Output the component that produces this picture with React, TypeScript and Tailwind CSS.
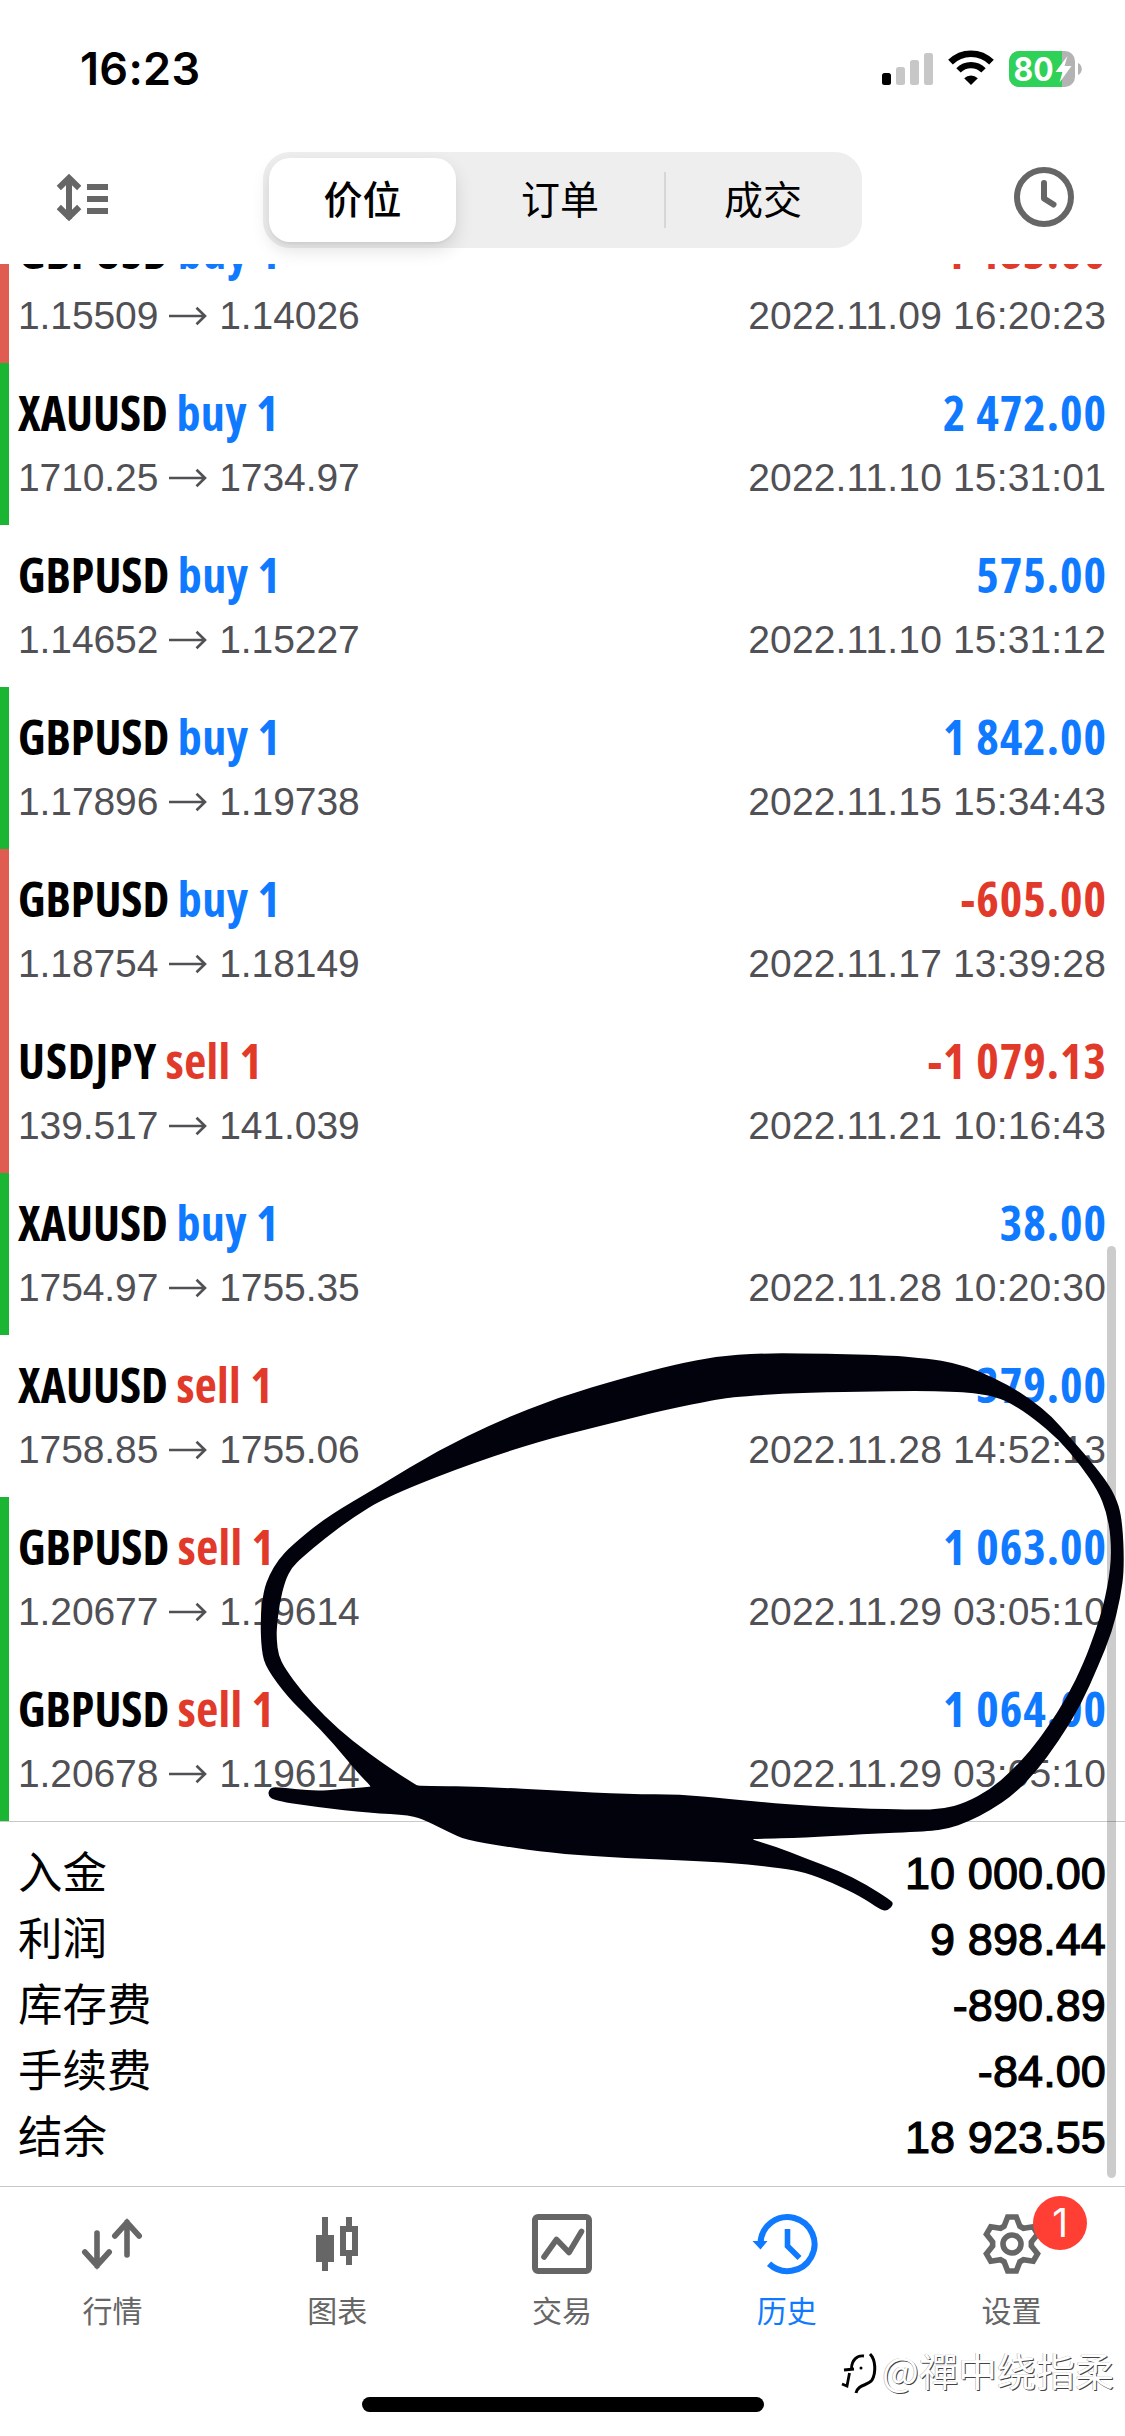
import { useState } from "react";

type Deal = {
  symbol: string;
  side: "buy" | "sell";
  open: string;
  close: string;
  profit: string;
  time: string;
  mark?: "tp" | "sl";
};

const deals: Deal[] = [
  { symbol: "GBPUSD", side: "buy", open: "1.15509", close: "1.14026", profit: "-1 483.00", time: "2022.11.09 16:20:23", mark: "sl" },
  { symbol: "XAUUSD", side: "buy", open: "1710.25", close: "1734.97", profit: "2 472.00", time: "2022.11.10 15:31:01", mark: "tp" },
  { symbol: "GBPUSD", side: "buy", open: "1.14652", close: "1.15227", profit: "575.00", time: "2022.11.10 15:31:12" },
  { symbol: "GBPUSD", side: "buy", open: "1.17896", close: "1.19738", profit: "1 842.00", time: "2022.11.15 15:34:43", mark: "tp" },
  { symbol: "GBPUSD", side: "buy", open: "1.18754", close: "1.18149", profit: "-605.00", time: "2022.11.17 13:39:28", mark: "sl" },
  { symbol: "USDJPY", side: "sell", open: "139.517", close: "141.039", profit: "-1 079.13", time: "2022.11.21 10:16:43", mark: "sl" },
  { symbol: "XAUUSD", side: "buy", open: "1754.97", close: "1755.35", profit: "38.00", time: "2022.11.28 10:20:30", mark: "tp" },
  { symbol: "XAUUSD", side: "sell", open: "1758.85", close: "1755.06", profit: "379.00", time: "2022.11.28 14:52:13" },
  { symbol: "GBPUSD", side: "sell", open: "1.20677", close: "1.19614", profit: "1 063.00", time: "2022.11.29 03:05:10", mark: "tp" },
  { symbol: "GBPUSD", side: "sell", open: "1.20678", close: "1.19614", profit: "1 064.00", time: "2022.11.29 03:05:10", mark: "tp" },
];

const totals = [
  { label: "入金", value: "10 000.00" },
  { label: "利润", value: "9 898.44" },
  { label: "库存费", value: "-890.89" },
  { label: "手续费", value: "-84.00" },
  { label: "结余", value: "18 923.55" },
];

const StatusBar = () => (
  <div className="flex h-[132px] shrink-0 items-start justify-between pl-[80px] pr-[42px] pt-[45px]">
    <span className="font-['Inter',sans-serif] text-[45px] font-semibold leading-[48px] tracking-[0.3px]">16:23</span>
    <div className="flex items-center pt-[5px]">
      <svg width="52" height="38" viewBox="0 0 52 38">
        <rect x="0" y="23" width="9" height="12" rx="2.5" fill="#000" />
        <rect x="14" y="17" width="9" height="18" rx="2.5" fill="#c7c7c7" />
        <rect x="28" y="10" width="9" height="25" rx="2.5" fill="#c7c7c7" />
        <rect x="42" y="3" width="9" height="32" rx="2.5" fill="#c7c7c7" />
      </svg>
      <svg className="ml-[14px]" width="46" height="38" viewBox="0 0 46 38">
        <path d="M2.5 12.2a29 29 0 0 1 41 0" fill="none" stroke="#000" strokeWidth="6.6" />
        <path d="M10.5 20.4a17.6 17.6 0 0 1 25 0" fill="none" stroke="#000" strokeWidth="6.2" />
        <path d="M16.2 28.2a9.8 9.8 0 0 1 13.6 0L23 35z" fill="#000" />
      </svg>
      <svg className="ml-[15px]" width="74" height="38" viewBox="0 0 74 38">
        <clipPath id="cell">
          <rect x="0" y="1" width="66" height="36" rx="10" />
        </clipPath>
        <g clipPath="url(#cell)">
          <rect width="66" height="38" fill="#b3b3b3" />
          <rect width="53" height="38" fill="#30d158" />
        </g>
        <path d="M69 13c5 2 5 10 0 12z" fill="#b3b3b3" />
        <text x="4.5" y="30.5" fill="#fff" fontSize="32" fontWeight="700" fontFamily="Inter, sans-serif" textLength="40" lengthAdjust="spacingAndGlyphs">80</text>
        <path d="M58.500 6L46.500 22h7l-3 10.500L62.500 16h-7z" fill="#fff" />
      </svg>
    </div>
  </div>
);

const Header = () => {
  const [active, setActive] = useState(0);
  const modes = ["价位", "订单", "成交"];
  const widths = ["w-[187px]", "w-[208px]", "w-[198px]"];

  return (
    <div className="flex h-[132px] shrink-0 items-start justify-between pl-[56px] pr-[50px] pt-[20px]">
      <svg className="mt-[21px]" width="54" height="50" viewBox="0 0 54 50" fill="none" stroke="#666" strokeWidth="6">
        <path d="M13 4v42M2.800 15L13 5l10.200 10M2.800 34L13 44l10.200-10" />
        <path d="M31 14h21M31 26h21M31 38h21" />
      </svg>
      <div className="ml-[2px] flex h-[96px] w-[599px] rounded-[27px] bg-[#eeeeee] py-[6px] pl-[6px]">
        {modes.map((mode, i) => (
          <button
            key={mode}
            onClick={() => setActive(i)}
            className={`relative h-[84px] pb-[5px] text-[39px] font-['Noto_Sans_CJK_SC',sans-serif] ${widths[i]} ${
              active === i ? "rounded-[21px] bg-white font-medium shadow-[0_8px_18px_rgba(0,0,0,0.12),0_2px_2px_rgba(0,0,0,0.04)]" : ""
            }`}
          >
            {mode}
            {i === 2 && <span className="absolute left-0 top-[14px] h-[56px] w-[2px] bg-[#d6d6d8]" />}
          </button>
        ))}
      </div>
      <svg className="mt-[14px]" width="62" height="62" viewBox="0 0 62 62" fill="none" stroke="#666" strokeWidth="6">
        <circle cx="31" cy="31" r="27" />
        <path d="M31 17v15.500l9.500 6" strokeLinecap="round" strokeLinejoin="round" />
      </svg>
    </div>
  );
};

const DealRow = ({ deal }: { deal: Deal }) => {
  const bar = deal.mark === "tp" ? "bg-[#1bb534]" : deal.mark === "sl" ? "bg-[#e05c50]" : "bg-white";
  const symbolSpacing = deal.symbol.endsWith("JPY") ? "tracking-[0.9px]" : "";

  return (
    <div className="flex h-[162px] shrink-0">
      <div className={`w-[9px] ${bar}`} />
      <div className="flex flex-1 justify-between pl-[9px] pr-[19px] pt-[22px]">
        <div>
          <div className="whitespace-nowrap font-['Open_Sans',sans-serif] text-[48px] font-bold leading-[56px] [font-stretch:75%]">
            <span className={symbolSpacing}>{deal.symbol}</span>{" "}
            <span className={`tracking-[0.4px] ${deal.side === "buy" ? "text-[#0f7aff]" : "text-[#e23a2a]"}`}>{deal.side} 1</span>
          </div>
          <div className="mt-[15px] flex items-center text-[39px] leading-[44px] tracking-[-0.1px] text-[#505055]">
            {deal.open}
            <svg className="mx-[11px]" width="39" height="20" viewBox="0 0 39 20" fill="none" stroke="currentColor" strokeWidth="2.6">
              <path d="M0 10h36M27.500 1.800l8.500 8.200-8.500 8.200" />
            </svg>
            {deal.close}
          </div>
        </div>
        <div className="text-right">
          <div
            className={`-mr-px whitespace-nowrap font-['Open_Sans',sans-serif] text-[48px] font-bold leading-[56px] tracking-[1px] [font-stretch:75%] ${
              deal.profit.startsWith("-") ? "text-[#e23a2a]" : "text-[#0f7aff]"
            }`}
          >
            {deal.profit}
          </div>
          <div className="mt-[15px] text-[39px] leading-[44px] tracking-[0.15px] text-[#505055]">{deal.time}</div>
        </div>
      </div>
    </div>
  );
};

const Totals = () => (
  <div className="h-[365px] shrink-0 border-t border-[#c8c8c8] px-[19px] pt-[17px]">
    {totals.map((t) => (
      <div key={t.label} className="flex h-[66px] items-center justify-between leading-[66px]">
        <span className="-ml-px -mt-[5px] font-['Noto_Sans_CJK_SC',sans-serif] text-[44.5px]">{t.label}</span>
        <span className="mt-[3px] text-[45px] tracking-[0.1px] [-webkit-text-stroke:1.2px_#000]">{t.value}</span>
      </div>
    ))}
  </div>
);

const QuotesIcon = () => (
  <svg width="64" height="64" viewBox="0 0 64 64" fill="none" stroke="currentColor" strokeWidth="5.6" strokeLinecap="round">
    <path d="M17 21v33M4.800 40L17 53.500 29.200 40M47 43V10M34.800 24L47 10.500 59.200 24" />
  </svg>
);

const ChartIcon = () => (
  <svg width="64" height="64" viewBox="0 0 64 64" fill="currentColor">
    <path d="M17 5h6v18h6v27h-6v9h-6v-9h-6V23h6z" />
    <path fillRule="evenodd" d="M41 5h6v9h6v30h-6v9h-6v-9h-6V14h6zM41 20v18h6V20z" />
  </svg>
);

const TradeIcon = () => (
  <svg width="64" height="64" viewBox="0 0 64 64" fill="none" stroke="currentColor" strokeWidth="6">
    <rect x="5" y="5" width="54" height="54" rx="3" />
    <path d="M14 45l12.500-17.500L39 40.500l12.500-21" strokeWidth="5.6" strokeLinecap="round" strokeLinejoin="round" />
  </svg>
);

const HistoryIcon = () => (
  <svg width="70" height="64" viewBox="-2 0 70 64" fill="none" stroke="currentColor" strokeWidth="6">
    <path d="M6.500 32A27 27 0 1 1 15 51.800" />
    <path d="M-1.500 29h15L6.500 37.500z" fill="currentColor" stroke="none" />
    <path d="M33.500 17v17l12 12" strokeWidth="5.600" />
  </svg>
);

// one tooth outline, turned six times round the hub
const tooth = [
  [-7.9, -17.8],
  [-4.3, -27],
  [4.3, -27],
  [7.9, -17.8],
];
const gearPoints = Array.from({ length: 6 }, (_, i) => {
  const a = (i * Math.PI) / 3;
  return tooth
    .map(([x, y]) => `${32 + x * Math.cos(a) - y * Math.sin(a)},${32 + x * Math.sin(a) + y * Math.cos(a)}`)
    .join(" ");
}).join(" ");

const SettingsIcon = () => (
  <svg width="64" height="64" viewBox="0 0 64 64" fill="none" stroke="currentColor" strokeWidth="5.6">
    <polygon points={gearPoints} />
    <circle cx="32" cy="32" r="9" />
  </svg>
);

const tabs = [
  { label: "行情", icon: QuotesIcon },
  { label: "图表", icon: ChartIcon },
  { label: "交易", icon: TradeIcon },
  { label: "历史", icon: HistoryIcon },
  { label: "设置", icon: SettingsIcon, badge: 1 },
];

const TabBar = () => {
  const [current, setCurrent] = useState("历史");

  return (
    <div className="flex h-[211px] shrink-0 border-t border-[#c8c8c8] pr-px pt-[25px]">
      {tabs.map(({ label, icon: Icon, badge }) => (
        <button
          key={label}
          onClick={() => setCurrent(label)}
          className={`relative flex flex-1 flex-col items-center ${current === label ? "text-[#0f7aff]" : "text-[#666]"}`}
        >
          <Icon />
          <span className="mt-[11px] font-['Noto_Sans_CJK_SC',sans-serif] text-[30px] leading-[44px]">{label}</span>
          {badge && (
            <span className="absolute left-[134px] top-[-16px] flex h-[54px] w-[54px] items-center justify-center rounded-full bg-[#ff3f34] font-['Inter',sans-serif] text-[39px] text-white">
              {badge}
            </span>
          )}
        </button>
      ))}
    </div>
  );
};

// closed curve through the middles of the segments
const smooth = (pts: number[][]) => {
  const mid = (a: number[], b: number[]) => `${(a[0] + b[0]) / 2} ${(a[1] + b[1]) / 2}`;
  const n = pts.length;
  return `M${mid(pts[n - 1], pts[0])}` + pts.map((p, i) => `Q${p[0]} ${p[1]} ${mid(p, pts[(i + 1) % n])}`).join("") + "Z";
};

const outer = [
  [232, 1192], [210, 1160], [165, 1080], [120, 1010], [85, 960], [47, 885], [38, 840], [36, 750], [42, 680], [52, 640], [68, 600],
  [90, 565], [150, 492], [250, 405], [350, 315], [455, 240], [565, 175], [680, 125], [770, 90], [845, 69], [920, 61], [1000, 61],
  [1150, 66], [1220, 75], [1265, 86], [1310, 108], [1360, 143], [1400, 180], [1440, 228], [1470, 280], [1500, 330], [1530, 385],
  [1550, 430], [1563, 490], [1567, 620], [1560, 700], [1545, 790], [1520, 880], [1490, 980], [1450, 1075], [1410, 1155],
  [1370, 1215], [1330, 1255], [1290, 1285], [1255, 1303], [1220, 1310], [1100, 1318], [1000, 1327], [915, 1330], [905, 1331], [950, 1350],
  [1000, 1380], [1060, 1412], [1110, 1450], [1150, 1487], [1159, 1500], [1147, 1519], [1133, 1514], [1100, 1480], [1050, 1445],
  [1000, 1417], [960, 1407], [880, 1393], [780, 1386], [650, 1378], [550, 1366], [470, 1350], [400, 1333], [370, 1312],
  [330, 1283], [302, 1268], [230, 1262], [140, 1248], [60, 1230], [49, 1215], [53, 1197], [65, 1194], [130, 1205], [180, 1200], [230, 1194],
];

const inner = [
  [315, 1191], [325, 1191], [440, 1194], [560, 1204], [690, 1213], [780, 1214], [860, 1224], [960, 1239], [1090, 1250], [1200, 1254], [1245, 1252],
  [1285, 1236], [1330, 1200], [1365, 1155], [1400, 1100], [1430, 1040], [1465, 960], [1495, 870], [1515, 790], [1530, 720],
  [1543, 620], [1543, 540], [1535, 475], [1520, 420], [1490, 355], [1450, 285], [1405, 230], [1370, 195], [1340, 175], [1300, 165],
  [1260, 161], [1200, 159], [1100, 161], [980, 165], [900, 172], [850, 180], [750, 210], [640, 250], [520, 295], [380, 365],
  [255, 440], [200, 490], [150, 545], [110, 595], [92, 620], [80, 655], [70, 715], [65, 780], [65, 810], [68, 850], [80, 885],
  [110, 945], [150, 1010], [200, 1075], [260, 1140], [310, 1187],
];

const InkCircle = () => (
  <svg
    className="pointer-events-none absolute left-[240px] top-[1330px] h-[600px] w-[885px]"
    viewBox="0 0 1568 1568"
    preserveAspectRatio="none"
  >
    <path d={smooth(outer) + smooth(inner)} fill="#02020d" fillRule="evenodd" />
  </svg>
);

const Watermark = () => (
  <div className="pointer-events-none absolute bottom-[39px] right-[11px] flex items-center">
    <svg className="mr-[4px] mt-[8px]" width="38" height="46" viewBox="0 0 38 46" fill="none" stroke="#000">
      <path d="M24 6C17 5 12 10 11.500 18M4 20l10-1M9.500 23L7 36l-5-2" strokeWidth="2.800" />
      <path d="M30 4c6 6 6 19 2 26-4 6-14 4-16 13" strokeWidth="3" />
      <circle cx="21" cy="18" r="1.500" fill="#000" stroke="none" />
    </svg>
    <span className="font-['Noto_Sans_CJK_SC',sans-serif] text-[39px] leading-[56px] text-white [text-shadow:1px_1px_0_#444,-0.5px_-0.5px_0_#aaa]">
      @禪中绕指柔
    </span>
  </div>
);

const App = () => {
  return (
    <div className="relative flex h-[2436px] w-[1125px] flex-col overflow-hidden bg-white font-['Liberation_Sans',sans-serif] text-black">
      <StatusBar />
      <Header />
      {/* Deals, scrolled to the end */}
      <div className="flex h-[1557px] shrink-0 flex-col justify-end overflow-hidden">
        {deals.map((deal, i) => (
          <DealRow key={i} deal={deal} />
        ))}
      </div>
      <Totals />
      <TabBar />
      <div className="mx-auto h-[15px] w-[402px] shrink-0 rounded-full bg-black" />

      {/* Scroll indicator */}
      <div className="absolute right-[9px] top-[1246px] h-[932px] w-[9px] rounded-full bg-black/20" />
      <InkCircle />
      <Watermark />
    </div>
  );
};

export default App;
